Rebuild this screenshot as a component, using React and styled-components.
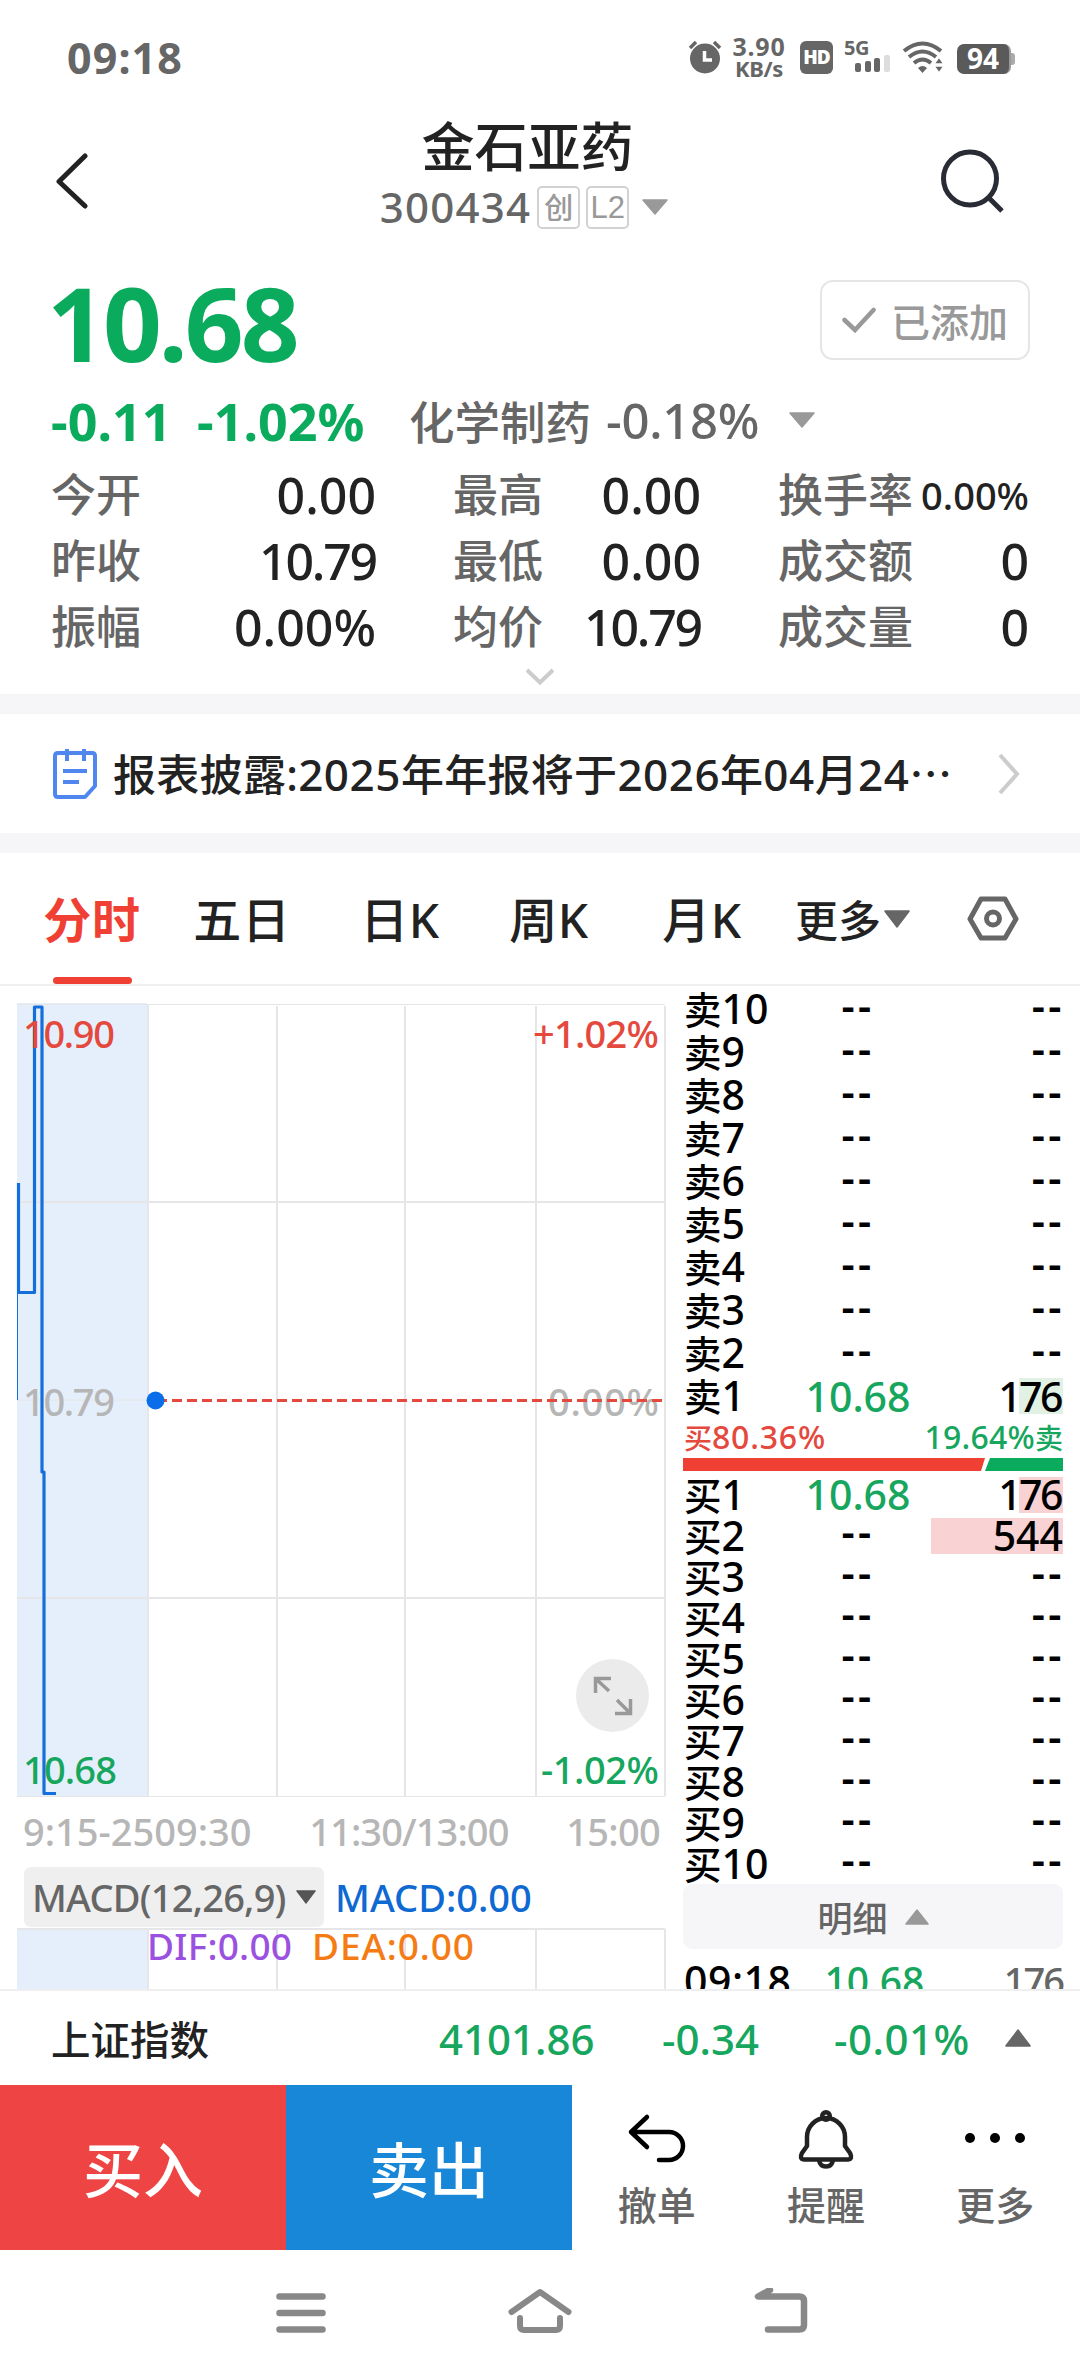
import styled, { createGlobalStyle } from 'styled-components';

const GREEN = '#0bab5d';
const RED = '#ef4033';
const LATIN = "'Noto Sans', 'Noto Sans CJK SC', sans-serif";

const GlobalStyle = createGlobalStyle`
  * {
    box-sizing: border-box;
  }
  body {
    margin: 0;
    background: #fff;
    font-family: ${LATIN};
    font-weight: 500;
    color: #222;
  }
`;

const stats = [
  ['今开', '0.00'],
  ['最高', '0.00'],
  ['换手率', '0.00%', true],
  ['昨收', '10.79'],
  ['最低', '0.00'],
  ['成交额', '0'],
  ['振幅', '0.00%'],
  ['均价', '10.79'],
  ['成交量', '0'],
];

const levels = [1, 2, 3, 4, 5, 6, 7, 8, 9, 10];
const sells = [...levels].reverse().map((n) => ({
  n,
  price: n === 1 ? '10.68' : '--',
  vol: n === 1 ? '176' : '--',
  bar: n === 1 ? 44 : 0,
}));
const buys = levels.map((n) => ({
  n,
  price: n === 1 ? '10.68' : '--',
  vol: { 1: '176', 2: '544' }[n] || '--',
  bar: { 1: 44, 2: 132 }[n] || 0,
}));

function StatusIcons() {
  return (
    <StatusRight>
      <svg width="34" height="34" viewBox="0 0 34 34">
        <circle cx="17" cy="18.5" r="15" fill="#666" />
        <path d="M2 8 L8 2 M26 2 L32 8" stroke="#666" strokeWidth="3.5" />
        <path d="M16.5 11 V20 H24" fill="none" stroke="#fff" strokeWidth="3.5" />
      </svg>
      <Speed>
        <Num $size={25} $weight={700} $ls={0.8}>3.90</Num>
        <Num $size={22} $weight={700} $ls={-0.3}>KB/s</Num>
      </Speed>
      <HdBadge>HD</HdBadge>
      <Signal>
        <Num $size={20} $weight={700} $ls={-0.5}>5G</Num>
        <svg width="36" height="18" viewBox="0 0 36 18">
          <rect x="0" y="8" width="6" height="9" rx="2" fill="#666" />
          <rect x="10" y="6" width="6" height="11" rx="2" fill="#666" />
          <rect x="19" y="3" width="6" height="14" rx="2" fill="#666" />
          <rect x="29" y="0" width="6" height="17" rx="2" fill="#ddd" />
        </svg>
      </Signal>
      <svg width="42" height="34" viewBox="0 0 42 34">
        <g fill="none" stroke="#666" strokeWidth="4">
          <path d="M2 11 Q20.500 -4 39 11" />
          <path d="M7 17 Q20.500 6 34 17" />
          <path d="M12 23 Q20.500 16 29 23" />
        </g>
        <path d="M16 28 Q20.500 24 25 28 L20.500 33 Z" fill="#666" />
        <path d="M37 17 L42 24 H32 Z M37 33 L42 26 H32 Z" fill="#666" stroke="#fff" strokeWidth="1.500" />
      </svg>
      <Battery>94</Battery>
      <BatteryTip />
    </StatusRight>
  );
}

function Triangle({ w = 26, h = 16, color = '#999', up }) {
  return (
    <svg width={w} height={h} viewBox="0 0 26 16" preserveAspectRatio="none">
      <path
        d={up ? 'M1 15 L13 1 L25 15 Z' : 'M1 1 L13 15 L25 1 Z'}
        fill={color}
        stroke={color}
        strokeWidth="1.500"
        strokeLinejoin="round"
      />
    </svg>
  );
}

// intraday price line with the call-auction zone on the left
function PriceChart() {
  return (
    <svg width="683" height="814" viewBox="0 986 683 814">
      <rect x="17" y="1003" width="130" height="794" fill="#e5effb" />
      <g stroke="#e6e6e8" strokeWidth="2">
        <path d="M17 1004.500 H665" strokeWidth="1" />
        <path d="M17 1202 H665" />
        <path d="M17 1400 H147" strokeWidth="1" />
        <path d="M17 1598 H665" />
        <path d="M17 1796.500 H665" strokeWidth="1" />
        <path d="M148 1004 V1796 M277 1006 V1796 M405 1006 V1796 M536 1006 V1796 M665 1006 V1796" />
      </g>
      <path d="M17.500 1291 V1400" stroke="#146fdc" strokeWidth="1" />
      <path
        d="M18.500 1183 V1292.500 H34.500 V1007 H42 V1472 H44 V1793.500 H56"
        fill="none"
        stroke="#146fdc"
        strokeWidth="3.2"
        strokeLinejoin="round"
      />
      <g fontSize="38" fontWeight="500">
        <text x="23" y="1048" fill="#e5483c" textLength="92">10.90</text>
        <text x="533" y="1048" fill="#e5483c" textLength="126">+1.02%</text>
        <text x="23" y="1416" fill="#b6b6b6" textLength="92">10.79</text>
        <text x="548" y="1416" fill="#b6b6b6" textLength="111">0.00%</text>
        <text x="23" y="1784" fill="#16a65d" textLength="94">10.68</text>
        <text x="541" y="1784" fill="#16a65d" textLength="118">-1.02%</text>
      </g>
      <path d="M157 1400.500 H663" stroke="#e5483c" strokeWidth="3.2" strokeDasharray="10 5" />
      <circle cx="155.500" cy="1400.500" r="9" fill="#0a6eea" />
    </svg>
  );
}

function MacdChart() {
  return (
    <svg width="683" height="62" viewBox="0 1927 683 62">
      <rect x="17" y="1929" width="130" height="60" fill="#e5effb" />
      <path
        d="M17 1929 H665 M148 1929 V1989 M277 1929 V1989 M405 1929 V1989 M536 1929 V1989 M665 1929 V1989"
        stroke="#e6e6e8"
        strokeWidth="2"
      />
      <g fontSize="37" fontWeight="500">
        <text x="147" y="1960" fill="#9b51e0" textLength="145">DIF:0.00</text>
        <text x="312" y="1960" fill="#f57c14" textLength="162">DEA:0.00</text>
      </g>
    </svg>
  );
}

function Level({ side, n, price, vol, bar }) {
  return (
    <LevelRow $buy={side === '买'}>
      <LevelName>
        {side}
        <Num $size={41}>{n}</Num>
      </LevelName>
      <LevelPrice>{price === '--' ? <Blank>--</Blank> : price}</LevelPrice>
      <LevelVol>
        {bar > 0 && <VolBar $buy={side === '买'} style={{ width: bar }} />}
        {vol === '--' ? <Blank $end>--</Blank> : <Volume $tight={vol.startsWith('1')}>{vol}</Volume>}
      </LevelVol>
    </LevelRow>
  );
}

export default function App() {
  return (
    <Screen lang="zh-CN">
      <GlobalStyle />
      <StatusBar>
        <Num $size={43} $weight={700} $ls={1.1}>09:18</Num>
        <StatusIcons />
      </StatusBar>

      <Header>
        <svg width="34" height="60" viewBox="0 0 34 60">
          <path d="M31 5 L5 30.500 L31 55" fill="none" stroke="#222" strokeWidth="5" strokeLinecap="round" strokeLinejoin="round" />
        </svg>
        <TitleBlock>
          <StockName>金石亚药</StockName>
          <CodeRow>
            <Num $size={42} $ls={1.2}>300434</Num>
            <Tag>创</Tag>
            <Tag $latin>L2</Tag>
            <Triangle />
          </CodeRow>
        </TitleBlock>
        <svg width="70" height="70" viewBox="0 0 70 70">
          <circle cx="32" cy="33.500" r="26.500" fill="none" stroke="#2a2c35" strokeWidth="5" />
          <path d="M51 53 L64 66" stroke="#2a2c35" strokeWidth="5" />
        </svg>
      </Header>

      <Quote>
        <PriceRow>
          <Num $size={103} $weight={700} $ls={-3}>10.68</Num>
          <AddedButton>
            <svg width="34" height="26" viewBox="0 0 34 26">
              <path d="M2.500 13 L13 23 L31.500 3" fill="none" stroke="#999" strokeWidth="4.500" strokeLinecap="round" />
            </svg>
            已添加
          </AddedButton>
        </PriceRow>
        <ChangeRow>
          <Change $w={146}>-0.11</Change>
          <Change $w={212}>-1.02%</Change>
          <Sector>
            化学制药
            <Num $size={49} $ls={-0.3}>-0.18%</Num>
          </Sector>
          <Triangle />
        </ChangeRow>
        <StatGrid>
          {stats.map(([label, value, small]) => (
            <Stat key={label}>
              {label}
              <StatValue $small={small} $tight={value.startsWith('1')}>
                {value}
              </StatValue>
            </Stat>
          ))}
        </StatGrid>
        <ExpandHint>
          <svg width="32" height="20" viewBox="0 0 32 20">
            <path d="M3 3 L16 15.500 L29 3" fill="none" stroke="#ccc" strokeWidth="4" />
          </svg>
        </ExpandHint>
      </Quote>

      <Notice>
        <svg width="46" height="52" viewBox="0 0 46 52">
          <g fill="none" stroke="#5087ee" strokeWidth="4">
            <path d="M6 5 H40 Q43 5 43 8 V38 L33 49 H6 Q3 49 3 46 V8 Q3 5 6 5 Z" strokeLinejoin="round" />
            <path d="M15 1 V13 M32 1 V13 M11 23 H35 M11 34 H27" />
          </g>
        </svg>
        <NoticeText>
          报表披露:<Num $size={44} $ls={0.5}>2025</Num>年年报将于<Num $size={44} $ls={0.5}>2026</Num>年
          <Num $size={44} $ls={0.5}>04</Num>月<Num $size={44} $ls={0.5}>24</Num>
          <Dots>…</Dots>
        </NoticeText>
        <svg width="24" height="44" viewBox="0 0 24 44">
          <path d="M3 3 L20 22 L3 41" fill="none" stroke="#ccc" strokeWidth="4" />
        </svg>
      </Notice>

      <Tabs>
        <Tab $active $w={184}>分时</Tab>
        <Tab $w={116}>五日</Tab>
        <Tab $w={200}>日K</Tab>
        <Tab $w={98}>周K</Tab>
        <Tab $w={208}>月K</Tab>
        <MoreTab>
          更多
          <Triangle w={26} h={18} color="#666" />
        </MoreTab>
        <svg width="52" height="46" viewBox="0 0 52 46">
          <path d="M14 3 H38 L49 23 L38 42 H14 L3 23 Z" fill="none" stroke="#666" strokeWidth="5" strokeLinejoin="round" />
          <circle cx="26" cy="22.500" r="6.500" fill="none" stroke="#666" strokeWidth="5" />
        </svg>
      </Tabs>

      <Market>
        <ChartPane>
          <PriceChart />
          <FullscreenButton>
            <svg width="40" height="40" viewBox="0 0 40 40">
              <path
                d="M2.500 17 V2.500 H18 M3 3 L16 15 M37.500 23 V37.500 H22 M37 37 L24 24"
                fill="none"
                stroke="#999"
                strokeWidth="3.500"
              />
            </svg>
          </FullscreenButton>
          <TimeAxis>
            <AxisLabel>9:15-2509:30</AxisLabel>
            <AxisLabel $ls={-0.9}>11:30/13:00</AxisLabel>
            <AxisLabel $ls={-0.7}>15:00</AxisLabel>
          </TimeAxis>
          <IndicatorRow>
            <IndicatorButton>
              MACD(12,26,9)
              <Triangle w={20} h={14} color="#555" />
            </IndicatorButton>
            <Macd>MACD:0.00</Macd>
          </IndicatorRow>
          <MacdChart />
        </ChartPane>

        <OrderBook>
          {sells.map((row) => (
            <Level key={row.n} side="卖" {...row} />
          ))}
          <RatioText>
            <Ratio $color="#e5483c">
              买<Num $size={32} $ls={0.8}>80.36%</Num>
            </Ratio>
            <Ratio $color="#16a65d">
              <Num $size={32} $ls={0.2}>19.64%</Num>卖
            </Ratio>
          </RatioText>
          <RatioBar>
            <BuyShare />
            <SellShare />
          </RatioBar>
          {buys.map((row) => (
            <Level key={row.n} side="买" {...row} />
          ))}
          <DetailButton>
            明细
            <Triangle w={24} />
          </DetailButton>
          <Trade>
            <Num $size={41} $ls={0.5}>09:18</Num>
            <TradePrice>10.68</TradePrice>
            <TradeVol>176</TradeVol>
          </Trade>
        </OrderBook>
      </Market>

      <IndexBar>
        <IndexName>上证指数</IndexName>
        <IndexValue $w={223}>4101.86</IndexValue>
        <IndexValue $w={172}>-0.34</IndexValue>
        <IndexValue $w={171} $ls={0.5}>-0.01%</IndexValue>
        <Triangle up h={18} color="#666" />
      </IndexBar>

      <Actions>
        <TradeButton $bg="#ef4444">买入</TradeButton>
        <TradeButton $bg="#1887d8">卖出</TradeButton>
        <Tool>
          <svg width="60" height="62" viewBox="0 0 60 62">
            <path
              d="M20 9 L4 24 L20 39 M4 24 H42 A13.500 13.500 0 0 1 42 52 H32"
              fill="none"
              stroke="#000"
              strokeWidth="4.500"
              strokeLinecap="round"
              strokeLinejoin="round"
            />
          </svg>
          撤单
        </Tool>
        <Tool>
          <svg width="60" height="62" viewBox="0 0 60 62">
            <g fill="none" stroke="#222" strokeWidth="4.500" strokeLinejoin="round">
              <path d="M11 38 V29 A19 19 0 0 1 49 29 V38 L54 45 Q57 51 52 51.500 H8 Q3 51 6 45 Z" />
              <circle cx="30" cy="8" r="3.800" />
              <path d="M23 52 Q24 58.500 30 58.500 Q36 58.500 37 52" />
            </g>
          </svg>
          提醒
        </Tool>
        <Tool>
          <svg width="60" height="62" viewBox="0 0 60 62">
            <circle cx="5" cy="30" r="5" />
            <circle cx="30" cy="30" r="5" />
            <circle cx="55" cy="30" r="5" />
          </svg>
          更多
        </Tool>
      </Actions>

      <NavBar>
        <svg width="50" height="50" viewBox="0 0 50 50">
          <path d="M3.500 8.500 H46.500 M3.500 25 H46.500 M3.500 41.500 H46.500" stroke="#888" strokeWidth="6.500" strokeLinecap="round" />
        </svg>
        <svg width="64" height="50" viewBox="0 0 64 50">
          <g fill="none" stroke="#888" strokeWidth="6" strokeLinecap="round" strokeLinejoin="round">
            <path d="M3.500 22 L32 2 L60.500 22" transform="translate(0 2)" />
            <path d="M12 30 V38 Q12 42 16 42 H48 Q52 42 52 38 V30" />
          </g>
        </svg>
        <svg width="56" height="50" viewBox="0 0 56 50">
          <path
            d="M16 2 L4 8.500 H45 Q50 8.500 50 13 V37 Q50 41.500 45 41.500 H14"
            fill="none"
            stroke="#888"
            strokeWidth="6.500"
            strokeLinecap="round"
            strokeLinejoin="round"
          />
        </svg>
      </NavBar>
    </Screen>
  );
}

const Screen = styled.div`
  display: flex;
  flex-direction: column;
  width: 1080px;
  height: 2376px;
  overflow: hidden;
  background: #fff;

  svg {
    display: block;
    flex-shrink: 0;
  }
`;

const Num = styled.span`
  font-family: ${LATIN};
  font-size: ${(p) => p.$size}px;
  font-weight: ${(p) => p.$weight || 500};
  letter-spacing: ${(p) => p.$ls || 0}px;
  line-height: 1;
`;

const StatusBar = styled.div`
  display: flex;
  align-items: center;
  justify-content: space-between;
  height: 114px;
  padding: 0 65px 0 67px;
  color: #666;
`;
const StatusRight = styled.div`
  display: flex;
  align-items: center;
`;
const Speed = styled.div`
  display: flex;
  flex-direction: column;
  align-items: center;
  width: 56px;
  margin: 0 13px 0 9px;

  span {
    line-height: 22px;
  }
`;
const HdBadge = styled.div`
  width: 33px;
  height: 33px;
  border-radius: 6px;
  background: #666;
  color: #fff;
  font-size: 19px;
  font-weight: 900;
  letter-spacing: -1px;
  line-height: 32px;
  text-align: center;
`;
const Signal = styled.div`
  display: flex;
  flex-direction: column;
  width: 47px;
  margin: 0 11px 0 11px;

  span {
    line-height: 14px;
  }
  svg {
    margin-left: 11px;
  }
`;
const Battery = styled.div`
  width: 54px;
  height: 30px;
  margin-left: 13px;
  margin-top: 3px;
  border-radius: 7px;
  border-right: 2px solid #999;
  background: #5a5a5a;
  color: #fff;
  font-size: 28px;
  font-weight: 700;
  line-height: 29px;
  text-align: center;
`;
const BatteryTip = styled.div`
  width: 4px;
  height: 12px;
  margin-top: 3px;
  border-radius: 0 3px 3px 0;
  background: #aaa;
`;

const Header = styled.div`
  display: flex;
  align-items: flex-start;
  justify-content: space-between;
  height: 150px;
  padding: 0 72px 0 54px;

  > svg {
    margin-top: 37px;
  }
  > svg:last-child {
    margin-top: 31px;
  }
`;
const TitleBlock = styled.div`
  display: flex;
  flex-direction: column;
  align-items: center;
  margin-left: 22px;
`;
const StockName = styled.div`
  padding-left: 7px;
  font-size: 53px;
  line-height: 66px;
`;
const CodeRow = styled.div`
  display: flex;
  align-items: center;
  height: 54px;
  color: #666;

  > svg {
    margin-left: 13px;
  }
`;
const Tag = styled.span`
  width: 43px;
  height: 43px;
  margin-left: 6px;
  border: 2px solid #d2d2d2;
  border-radius: 5px;
  color: #999;
  font-family: ${(p) => (p.$latin ? "'Liberation Sans', sans-serif" : LATIN)};
  font-size: ${(p) => (p.$latin ? 31 : 29)}px;
  line-height: 40px;
  text-align: center;
`;

const Quote = styled.div`
  display: flex;
  flex-direction: column;
  height: 430px;
`;
const PriceRow = styled.div`
  display: flex;
  align-items: flex-start;
  justify-content: space-between;
  height: 120px;
  padding: 8px 50px 0 47px;
  color: ${GREEN};

  > span {
    line-height: 100px;
  }
`;
const AddedButton = styled.div`
  display: flex;
  align-items: center;
  justify-content: center;
  gap: 15px;
  width: 210px;
  height: 80px;
  margin-top: 8px;
  border: 2px solid #e5e5e5;
  border-radius: 13px;
  color: #999;
  font-size: 39px;
`;
const ChangeRow = styled.div`
  display: flex;
  align-items: center;
  height: 72px;
  padding-left: 51px;

  > svg {
    margin: -1px 0 0 30px;
  }
`;
const Change = styled.span`
  width: ${(p) => p.$w}px;
  color: ${GREEN};
  font-size: 52px;
  font-weight: 700;
  letter-spacing: 0;
`;
const Sector = styled.span`
  display: flex;
  align-items: center;
  gap: 15px;
  color: #666;
  font-size: 45.5px;
`;
const StatGrid = styled.div`
  display: grid;
  grid-template-columns: 325px 248px 251px;
  grid-auto-rows: 66px;
  column-gap: 77px;
  padding: 6px 0 0 51px;
`;
const Stat = styled.div`
  display: flex;
  align-items: center;
  justify-content: space-between;
  color: #666;
  font-size: 45px;
  line-height: 66px;
  white-space: nowrap;
`;
const StatValue = styled.span`
  color: #222;
  font-size: ${(p) => (p.$small ? 38 : 50)}px;
  letter-spacing: ${(p) => (p.$tight ? -2.2 : 0)}px;
`;
const ExpandHint = styled.div`
  display: flex;
  justify-content: center;
  padding-top: 7px;
`;

const Notice = styled.div`
  display: flex;
  align-items: center;
  height: 159px;
  padding: 0 59px 0 52px;
  border-top: 20px solid #f6f6f9;
  border-bottom: 20px solid #f6f6f9;
`;
const NoticeText = styled.div`
  flex: 1;
  margin-left: 15px;
  font-size: 43px;
  letter-spacing: 0.3px;
  line-height: 60px;
  white-space: nowrap;
`;
const Dots = styled.span`
  font-family: 'Noto Sans CJK SC', sans-serif;
`;

const Tabs = styled.div`
  display: flex;
  align-items: center;
  height: 133px;
  border-bottom: 2px solid #efeff1;

  > svg {
    margin-left: 57px;
  }
`;
const Tab = styled.div`
  position: relative;
  display: flex;
  justify-content: center;
  width: ${(p) => p.$w}px;
  height: 131px;
  color: ${(p) => (p.$active ? RED : '#222')};
  font-size: 48px;
  font-weight: ${(p) => (p.$active ? 700 : 500)};
  letter-spacing: 0.7px;
  line-height: 134px;

  &::after {
    content: '';
    display: ${(p) => (p.$active ? 'block' : 'none')};
    position: absolute;
    bottom: 0;
    left: 53px;
    width: 79px;
    height: 7px;
    border-radius: 4px;
    background: ${RED};
  }
`;
const MoreTab = styled.div`
  display: flex;
  align-items: center;
  gap: 3px;
  margin-left: -11px;
  color: #222;
  font-size: 43px;
`;

const Market = styled.div`
  display: flex;
  height: 1003px;
  overflow: hidden;
`;
const ChartPane = styled.div`
  position: relative;
  width: 683px;
`;
const FullscreenButton = styled.div`
  position: absolute;
  top: 673px;
  left: 576px;
  display: flex;
  align-items: center;
  justify-content: center;
  width: 73px;
  height: 73px;
  border-radius: 50%;
  background: #ebebeb;
`;
const TimeAxis = styled.div`
  display: flex;
  justify-content: space-between;
  height: 64px;
  padding: 0 23px 0 23px;
  color: #b6b6b6;
  font-size: 38px;
  line-height: 62px;
`;
const AxisLabel = styled.span`
  letter-spacing: ${(p) => p.$ls || 0}px;
`;
const IndicatorRow = styled.div`
  display: flex;
  align-items: center;
  gap: 11px;
  height: 63px;
  padding: 2px 0 0 24px;
`;
const IndicatorButton = styled.div`
  display: flex;
  align-items: center;
  justify-content: space-between;
  width: 300px;
  height: 60px;
  padding: 0 8px;
  border-radius: 7px;
  background: #efefef;
  color: #666;
  font-size: 38px;
  letter-spacing: -0.8px;
`;
const Macd = styled.span`
  color: #0f69d2;
  font-size: 38px;
`;

const OrderBook = styled.div`
  width: 380px;
  padding-top: 2px;
  color: #000;
`;
const LevelRow = styled.div`
  display: grid;
  grid-template-columns: 110px 130px 1fr;
  height: ${(p) => (p.$buy ? 41 : 43)}px;
  font-size: 41px;
  line-height: ${(p) => (p.$buy ? 41 : 43)}px;
`;
const LevelName = styled.span`
  padding-left: 1px;
  font-size: 37.5px;
  white-space: nowrap;
`;
const LevelPrice = styled.span`
  color: #16a65d;
  text-align: center;
`;
const LevelVol = styled.span`
  position: relative;
  text-align: right;
`;
const Volume = styled.span`
  position: relative;
  margin-right: ${(p) => (p.$tight ? 2 : 0)}px;
  letter-spacing: ${(p) => (p.$tight ? -2.5 : 0)}px;
`;
// placeholder for an empty level, lifted to the middle of the digits
const Blank = styled.span`
  display: block;
  margin-top: -4px;
  margin-right: ${(p) => (p.$end ? -2 : 0)}px;
  color: #000;
  font-weight: 600;
  letter-spacing: 3.5px;
`;
const VolBar = styled.i`
  position: absolute;
  top: 3px;
  right: 0;
  height: 36px;
  background: ${(p) => (p.$buy ? '#f9d3d3' : '#e1f2e4')};
`;
const RatioText = styled.div`
  display: flex;
  justify-content: space-between;
  height: 40px;
  padding: 0 0 0 1px;
  line-height: 40px;
`;
const Ratio = styled.span`
  color: ${(p) => p.$color};
  font-size: 28px;
`;
const RatioBar = styled.div`
  display: flex;
  height: 13px;
  margin-bottom: 3px;
`;
const BuyShare = styled.div`
  width: 302px;
  background: ${RED};
  clip-path: polygon(0 0, 100% 0, calc(100% - 4px) 100%, 0 100%);
`;
const SellShare = styled.div`
  flex: 1;
  background: ${GREEN};
  clip-path: polygon(5px 0, 100% 0, 100% 100%, 0 100%);
`;
const DetailButton = styled.div`
  display: flex;
  align-items: center;
  justify-content: center;
  gap: 17px;
  height: 65px;
  border-radius: 9px;
  background: #f6f6f9;
  color: #666;
  font-size: 35px;

  svg {
    transform: rotate(180deg);
  }
`;
const Trade = styled.div`
  display: flex;
  align-items: center;
  height: 62px;
  padding-left: 1px;
`;
const TradePrice = styled.span`
  margin-left: 33px;
  color: #16a65d;
  font-size: 39px;
`;
const TradeVol = styled.span`
  margin-left: auto;
  color: #666;
  font-size: 38px;
  letter-spacing: -2px;
`;

const IndexBar = styled.div`
  display: flex;
  align-items: center;
  height: 96px;
  padding-left: 51px;
  border-top: 2px solid #efeff1;
`;
const IndexName = styled.span`
  width: 388px;
  font-size: 39.5px;
`;
const IndexValue = styled.span`
  width: ${(p) => p.$w}px;
  color: #16a65d;
  font-size: 42px;
  letter-spacing: ${(p) => p.$ls || 0}px;
`;

const Actions = styled.div`
  display: flex;
  height: 165px;
`;
const TradeButton = styled.div`
  width: 286px;
  background: ${(p) => p.$bg};
  color: #fff;
  font-size: 60px;
  line-height: 170px;
  text-align: center;
`;
const Tool = styled.div`
  display: flex;
  flex: 1;
  flex-direction: column;
  align-items: center;
  padding-top: 23px;
  color: #666;
  font-size: 39px;
  line-height: 70px;
`;

const NavBar = styled.div`
  display: flex;
  align-items: flex-start;
  justify-content: space-between;
  width: 534px;
  margin: 38px 0 0 276px;
`;
